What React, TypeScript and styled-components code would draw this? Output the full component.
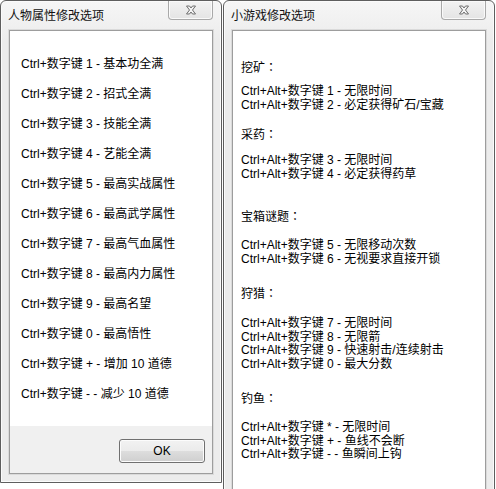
import React from 'react';
import styled, { createGlobalStyle } from 'styled-components';

const GlobalStyle = createGlobalStyle`
  html, body {
    margin: 0;
    padding: 0;
    background: #ffffff;
    overflow: hidden;
  }
  #root {
    height: 489px;
    overflow: hidden;
  }
`;

const leftItems = [
  'Ctrl+数字键 1 - 基本功全满',
  'Ctrl+数字键 2 - 招式全满',
  'Ctrl+数字键 3 - 技能全满',
  'Ctrl+数字键 4 - 艺能全满',
  'Ctrl+数字键 5 - 最高实战属性',
  'Ctrl+数字键 6 - 最高武学属性',
  'Ctrl+数字键 7 - 最高气血属性',
  'Ctrl+数字键 8 - 最高内力属性',
  'Ctrl+数字键 9 - 最高名望',
  'Ctrl+数字键 0 - 最高悟性',
  'Ctrl+数字键 + - 增加 10 道德',
  'Ctrl+数字键 - - 减少 10 道德',
];

const sections = [
  {
    title: '挖矿',
    top: 29,
    gap: 10,
    lines: ['Ctrl+Alt+数字键 1 - 无限时间', 'Ctrl+Alt+数字键 2 - 必定获得矿石/宝藏'],
  },
  {
    title: '采药',
    top: 15,
    gap: 12,
    lines: ['Ctrl+Alt+数字键 3 - 无限时间', 'Ctrl+Alt+数字键 4 - 必定获得药草'],
  },
  {
    title: '宝箱谜题',
    top: 28,
    gap: 15,
    lines: ['Ctrl+Alt+数字键 5 - 无限移动次数', 'Ctrl+Alt+数字键 6 - 无视要求直接开锁'],
  },
  {
    title: '狩猎',
    top: 20,
    gap: 16,
    lines: [
      'Ctrl+Alt+数字键 7 - 无限时间',
      'Ctrl+Alt+数字键 8 - 无限箭',
      'Ctrl+Alt+数字键 9 - 快速射击/连续射击',
      'Ctrl+Alt+数字键 0 - 最大分数',
    ],
  },
  {
    title: '钓鱼',
    top: 20,
    gap: 15,
    lines: [
      'Ctrl+Alt+数字键 * - 无限时间',
      'Ctrl+Alt+数字键 + - 鱼线不会断',
      'Ctrl+Alt+数字键 - - 鱼瞬间上钩',
    ],
  },
];

const CloseGlyph = () => (
  <svg width="12" height="10" viewBox="0 0 12 10">
    <path
      d="M1.5 1 L4.5 1 L6 3 L7.5 1 L10.5 1 L7.5 5 L10.5 9 L7.5 9 L6 7 L4.5 9 L1.5 9 L4.5 5 Z"
      fill="#f4f4f4"
      stroke="#6e6e6e"
      strokeWidth="1"
      strokeLinejoin="round"
    />
  </svg>
);

const App = () => {
  return (
    <>
      <GlobalStyle />
      <Desktop>
        <Window $width={222} $height={483}>
          <TitleBar>
            <Title>人物属性修改选项</Title>
            <CloseButton>
              <CloseGlyph />
            </CloseButton>
          </TitleBar>
          <Client>
            <LeftPanel>
              {leftItems.map(item => (
                <Line key={item}>{item}</Line>
              ))}
            </LeftPanel>
            <Footer>
              <OkButton>OK</OkButton>
            </Footer>
          </Client>
        </Window>
        <Window $width={272} $height={540}>
          <TitleBar>
            <Title>小游戏修改选项</Title>
            <CloseButton>
              <CloseGlyph />
            </CloseButton>
          </TitleBar>
          <Client>
            <RightPanel>
              {sections.map(section => (
                <Section key={section.title} $top={section.top}>
                  <Heading $gap={section.gap}>
                    {section.title}
                    <Colon>：</Colon>
                  </Heading>
                  {section.lines.map(line => (
                    <HotkeyLine key={line}>{line}</HotkeyLine>
                  ))}
                </Section>
              ))}
            </RightPanel>
          </Client>
        </Window>
      </Desktop>
    </>
  );
};

const Desktop = styled.div`
  display: flex;
  align-items: flex-start;
  gap: 1px;
  font-family: 'Liberation Sans', 'Noto Sans CJK SC', sans-serif;
  font-size: 12px;
  color: #000;
`;

const Window = styled.div<{ $width: number; $height: number }>`
  flex: none;
  width: ${p => p.$width}px;
  height: ${p => p.$height}px;
  box-sizing: border-box;
  display: flex;
  flex-direction: column;
  padding: 0 8px 8px 8px;
  border: 1px solid #5e5e5e;
  border-radius: 6px 6px 0 0;
  background: linear-gradient(#f6f6f6, #ececec 40px, #ececec);
  box-shadow: inset 0 0 0 1px #fbfbfb;
`;

const TitleBar = styled.div`
  height: 29px;
  display: flex;
  align-items: flex-start;
  flex: none;
`;

const Title = styled.span`
  align-self: center;
  margin-left: -1px;
  font-size: 12px;
  line-height: 14px;
  color: #111;
`;

const CloseButton = styled.div`
  margin-left: auto;
  width: 45px;
  height: 19px;
  box-sizing: border-box;
  display: flex;
  align-items: center;
  justify-content: center;
  border: 1px solid #a9a9a9;
  border-top: none;
  border-radius: 0 0 4px 4px;
  background: linear-gradient(#f3f3f3, #e4e4e4);
  box-shadow: inset 0 0 0 1px #fafafa;
`;

const Client = styled.div`
  flex: 1;
  display: flex;
  flex-direction: column;
  min-height: 0;
  border: 1px solid #9d9d9d;
  box-shadow: 0 0 0 1px #dadada;
  background: #ffffff;
`;

const LeftPanel = styled.div`
  flex: 1;
  display: flex;
  flex-direction: column;
  gap: 16px;
  padding: 26px 0 0 11px;
  background: #ffffff;
`;

const Line = styled.div`
  line-height: 14px;
  white-space: nowrap;
`;

const Footer = styled.div`
  flex: none;
  height: 47px;
  box-sizing: border-box;
  display: flex;
  justify-content: flex-end;
  align-items: flex-start;
  padding: 13px 7px 0 0;
  background: #f0f0f0;
`;

const OkButton = styled.div`
  width: 86px;
  height: 24px;
  box-sizing: border-box;
  display: flex;
  align-items: center;
  justify-content: center;
  border: 1px solid #707070;
  border-radius: 3px;
  background: linear-gradient(#f2f2f2 0%, #ebebeb 50%, #dddddd 51%, #cfcfcf 100%);
  box-shadow: inset 0 0 0 1px #fcfcfc;
  font-size: 12px;
  color: #000;
`;

const RightPanel = styled.div`
  flex: 1;
  display: flex;
  flex-direction: column;
  padding-left: 8px;
`;

const Section = styled.div<{ $top: number }>`
  margin-top: ${p => p.$top}px;
  display: flex;
  flex-direction: column;
`;

const Heading = styled.div<{ $gap: number }>`
  line-height: 14px;
  margin-bottom: ${p => p.$gap}px;
`;

const Colon = styled.span`
  font-family: 'Noto Sans CJK TC', 'Noto Sans CJK SC', sans-serif;
`;

const HotkeyLine = styled.div`
  line-height: 13.5px;
  white-space: nowrap;
`;

export default App;
